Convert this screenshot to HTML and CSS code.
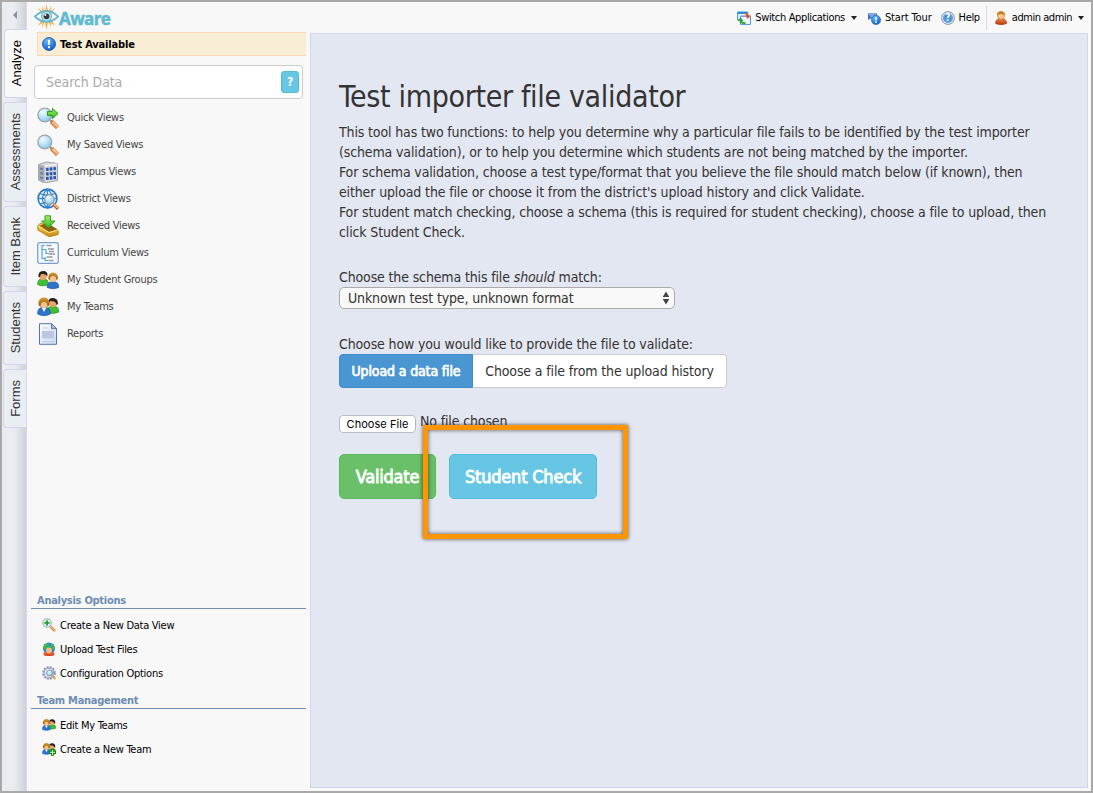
FILE: index.html
```html
<!DOCTYPE html>
<html lang="en">
<head>
<meta charset="utf-8">
<title>Test importer file validator</title>
<link rel="stylesheet" href="styles.css">
</head>
<body>
<svg class="defs" width="0" height="0" aria-hidden="true">
  <defs>
    <radialGradient id="lens" cx=".35" cy=".3" r=".8"><stop offset="0" stop-color="#f2fbff"/><stop offset=".5" stop-color="#b9e2f6"/><stop offset="1" stop-color="#7cbfe6"/></radialGradient>
    <linearGradient id="leaf" x2="0" y2="1"><stop offset="0" stop-color="#a4f06a"/><stop offset="1" stop-color="#2fb41c"/></linearGradient>
    <linearGradient id="gold" x2="0" y2="1"><stop offset="0" stop-color="#ffd75a"/><stop offset="1" stop-color="#c98a10"/></linearGradient>
    <radialGradient id="blue" cx=".4" cy=".25" r=".8"><stop offset="0" stop-color="#6dbcff"/><stop offset="1" stop-color="#0a58c4"/></radialGradient>
    <linearGradient id="hair" x2="0" y2="1"><stop offset="0" stop-color="#d69b34"/><stop offset="1" stop-color="#8f560c"/></linearGradient>
    <linearGradient id="page" x2="1" y2="1"><stop offset="0" stop-color="#ffffff"/><stop offset="1" stop-color="#cdd9f2"/></linearGradient>
    <linearGradient id="rust" x2="0" y2="1"><stop offset="0" stop-color="#f08a4a"/><stop offset="1" stop-color="#b83708"/></linearGradient>
  </defs>
  <symbol id="magnifier" viewBox="0 0 22 22">
    <path d="M13 13l2.500 2.500" stroke="#888" stroke-width="2"/>
    <path d="M14.500 14.500l6 6" stroke="#c4703a" stroke-width="4.400"/>
    <path d="M15 15l5.200 5.200" stroke="#f99a4f" stroke-width="3"/>
    <path d="M16 14.800l4.500 4.500" stroke="#ffe0be" stroke-width="1.200"/>
    <circle cx="7.800" cy="8" r="6.900" fill="url(#lens)" stroke="#a0a6aa" stroke-width="1.400"/>
  </symbol>
  <symbol id="quick" viewBox="0 0 22 22">
    <use href="#magnifier"/>
    <path d="M10.500 4.500h5V1.300l5.500 5.200-5.500 5.200V8.500h-5z" fill="url(#leaf)" stroke="#22961a" stroke-width=".9"/>
  </symbol>
  <symbol id="campus" viewBox="0 0 22 22">
    <path d="M1.500 3.500l8-2.500 11 1.500v17l-13 2.500-6-3z" fill="#d7d9dc" stroke="#8b9096" stroke-width=".8"/>
    <path d="M1.500 3.500l6 1.500v17l-6-3z" fill="#a9adb2"/>
    <path d="M7.500 5l13-2" stroke="#fff"/>
    <path d="M3 7.500l3 .7M3 12l3 .8M3 16.500l3 .8" stroke="#6d80a5" stroke-width="2"/>
    <path d="M9 8.500l10-1M9 13l10-.7M9 17.500l10-1" stroke="#2857b0" stroke-width="3.200" stroke-dasharray="2.700 1"/>
  </symbol>
  <symbol id="district" viewBox="0 0 22 22">
    <circle cx="10.500" cy="10.500" r="9.400" fill="#f5fbff" stroke="#2777c8" stroke-width="1.600"/>
    <path d="M1 10.500h19M2.500 5.500q8 3 16 0M2.500 16q8-3 16 0M10.500 1v19M10.500 1q-10 9.500 0 19M10.500 1q10 9.500 0 19" fill="none" stroke="#3385d2" stroke-width="1.300"/>
    <circle cx="12.500" cy="11.500" r="4.800" fill="url(#lens)" stroke="#8f9ca8" stroke-width="1.200"/>
    <path d="M16.500 16l4.500 5" stroke="#cb5a23" stroke-width="3.200"/><path d="M16.500 15.500l4.200 4.500" stroke="#ffc582" stroke-width="1.400"/>
  </symbol>
  <symbol id="received" viewBox="0 0 22 22">
    <path d="M.8 10.500l3-2.500 17.400 7.500v4l-9 2.300L.8 15z" fill="url(#gold)" stroke="#a8740c" stroke-width=".8"/>
    <path d="M2.500 10.500l8-2.500 10 6.500-8.500 2.500z" fill="#8b610b"/>
    <path d="M1.300 11.500l10.700 6 9-2.500" fill="none" stroke="#ffe990"/>
    <path d="M8 .8h5.500V6H18l-6.500 7L4.500 6H8z" fill="url(#leaf)" stroke="#279b1c" stroke-width=".9"/>
  </symbol>
  <symbol id="curriculum" viewBox="0 0 22 22">
    <rect x=".7" y=".7" width="20.600" height="20.600" rx="2" fill="#f6f9ff" stroke="#7f9fd0" stroke-width="1.300"/>
    <path d="M5 3v13.500h3M5 3.500h3M5 7.500h4M9 7.500v4h3M8 15v3.500h3" fill="none" stroke="#4ba7dd" stroke-width="1.200"/>
    <path d="M9.500 3.500h5M11 7h6M12 9.500h5M12 12h6M9.500 15h6M11.500 18.500h5" stroke="#999ca1" stroke-width="1.400"/>
  </symbol>
  <symbol id="groups" viewBox="0 0 22 22">
    <path d="M.5 15.500q0-6 5.500-6t5.500 6q-5.500 3-11 0z" fill="#43bd35" stroke="#258f20" stroke-width=".6"/>
    <circle cx="6" cy="7" r="3.900" fill="#e9a56a"/><path d="M1.500 8Q1 2 6 2t4.500 5Q8 4.500 4 5L3 8z" fill="#24201c"/>
    <path d="M10 18.500q0-6 6-6t6 6q-6 2.500-12 0z" fill="#2f73cf" stroke="#1c52a6" stroke-width=".6"/>
    <circle cx="16" cy="9" r="4" fill="#f5c28e"/><path d="M11.300 10Q11 3.500 16 3.500t5 6.500l-1.500 1q0-4-3.500-4t-3 4z" fill="url(#hair)"/>
  </symbol>
  <symbol id="teams" viewBox="0 0 22 22">
    <path d="M10 16q0-6 6-6t6 6q-6 3-12 0z" fill="#43bd35" stroke="#258f20" stroke-width=".6"/>
    <circle cx="16" cy="7" r="4" fill="#e9a56a"/><path d="M11.300 7Q11 2 16 2t5 6l-1.500 1q0-4-6-4z" fill="#24201c"/>
    <path d="M.5 18q0-7 6.500-7t6.500 7q-6.500 3.500-13 0z" fill="#2f73cf" stroke="#1c52a6" stroke-width=".6"/>
    <path d="M5 12l2 4 2-4z" fill="#fff"/>
    <circle cx="7" cy="7.500" r="4.700" fill="#f5c28e"/><path d="M1.500 9Q1 1.500 7 1.500T12.500 9L10.500 11q0-5-3.500-5t-3.500 5z" fill="url(#hair)"/>
  </symbol>
  <symbol id="report" viewBox="0 0 22 22">
    <path d="M2.500.7h12l5 5v15.600h-17z" fill="url(#page)" stroke="#5876ad" stroke-width="1"/>
    <path d="M14.500.7v5h5z" fill="#a9c0e8" stroke="#5876ad"/>
    <path d="M5.500 5h6M5.500 18.500h11" stroke="#c2c9dc"/><path d="M5 8h12v7.500H5z" fill="#bdc6df"/>
  </symbol>
  <symbol id="add-view" viewBox="0 0 14 14">
    <path d="M8.500 8.500l4.500 4.500" stroke="#d08c48" stroke-width="2.600"/><path d="M9 8.500l4 4" stroke="#ffd8a0"/>
    <circle cx="5" cy="5" r="4.300" fill="#ddf3fa" stroke="#9aabb4"/>
    <path d="M5 2.200v5.600M2.200 5h5.600" stroke="#20a020" stroke-width="1.700"/>
  </symbol>
  <symbol id="upload" viewBox="0 0 14 14">
    <circle cx="7" cy="6.500" r="6" fill="#318bd2"/><path d="M4 1.500q4 .5 3 4l-5 2Q0 3 4 1.500zM9 1q4 2 4 6l-4 0z" fill="#43b64b"/>
    <path d="M1.500 12.500V11L4 9.500q0-3 3-3t3 3l2.500 1.500v1.500q-5.500 3-11 0z" fill="#e66338"/><circle cx="7" cy="8.300" r="2.900" fill="#f5bd89"/>
    <path d="M2 12.500q5 1.600 10 0" stroke="#d84a22" stroke-width="1.500" fill="none"/>
  </symbol>
  <symbol id="config" viewBox="0 0 14 14">
    <circle cx="7" cy="7" r="5.900" fill="none" stroke="#8e94b8" stroke-width="1.800" stroke-dasharray="2 1.090"/>
    <circle cx="7" cy="7" r="4.800" fill="#f5f6fc" stroke="#9298bb" stroke-width="1"/>
    <circle cx="7.500" cy="7" r="3" fill="url(#lens)" stroke="#7896b8"/><path d="M9.800 9.500l3.500 3.500" stroke="#e79a62" stroke-width="2.200"/>
  </symbol>
  <symbol id="add-team" viewBox="0 0 14 14">
    <use href="#teams" width="14" height="14"/><path d="M10.500 6.800v7M7 10.300h7" stroke="#087d12" stroke-width="3.200"/><path d="M10.500 7.700v5.200M7.900 10.300h5.200" stroke="#b6f497" stroke-width="1.200"/>
  </symbol>
  <symbol id="switch" viewBox="0 0 14 14">
    <path d="M.7 1h10v8H.7z" fill="#eef7ff" stroke="#2b8bdd"/><path d="M.7 2h10" stroke="#2b8bdd" stroke-width="2"/>
    <path d="M3.500 5h10v8.400h-10z" fill="#f4faff" stroke="#4796e0"/><path d="M3.500 5.500h10" stroke="#6badf0"/>
    <path d="M7 2q4-1 4.500 2.500H13.500L10.800 8 8 4.500H9.500Q9 3 7 2z" fill="#ee5023"/>
    <path d="M8.500 13q-6 .5-6-3H.5L3.500 6.500l3.200 3.500H5q.3 1.500 3.500 1z" fill="#2da534"/>
  </symbol>
  <symbol id="tour" viewBox="0 0 14 14">
    <path d="M1 2.500h9v5H3.500L1 9z" fill="#3e6fc2"/><path d="M1 2.500h9L4.500 7z" fill="#7ea5e2"/>
    <circle cx="9" cy="9" r="4.700" fill="url(#blue)" stroke="#1c63c2" stroke-width=".5"/><path d="M9 6v3.500M9 10.500V12" stroke="#fff" stroke-width="1.500"/>
  </symbol>
  <symbol id="user" viewBox="0 0 14 14">
    <path d="M1.500 12.500Q1.500 7.500 7 7.500t5.700 5Q7 15 1.500 12.500z" fill="url(#rust)" stroke="#b23b0c" stroke-width=".6"/>
    <circle cx="7" cy="4.500" r="3.700" fill="#f7c590" stroke="#c8812f" stroke-width=".6"/><path d="M3 4.500Q3 .2 7 .2t4 4.600Q9 2.500 6 3z" fill="#c87d19"/>
  </symbol>
</svg>

<div class="app">
  <nav class="tabs">
    <div class="collapse"><i></i></div>
    <a class="tab tab-analyze active"><span>Analyze</span></a>
    <a class="tab tab-assessments"><span>Assessments</span></a>
    <a class="tab tab-bank"><span>Item Bank</span></a>
    <a class="tab tab-students"><span>Students</span></a>
    <a class="tab tab-forms"><span>Forms</span></a>
  </nav>

  <aside class="sidebar">
    <div class="brand">
      <svg width="25" height="26" viewBox="0 0 25 26">
        <path d="M12.500 0l1.500 7h-3zM12.500 26l1.500-7h-3zM4 4l5.500 4-2 2zM21 4l-5.500 4 2 2zM4 22l5.500-4-2-2zM21 22l-5.500-4 2-2zM8 1.500l2.500 6-2 .5zM17 1.500l-2.500 6 2 .5zM8 24l2.500-6-2-.5zM17 24l-2.500-6 2-.5z" fill="#f4b350"/>
        <path d="M.8 12.500Q12.500 1.500 24.200 12.500 12.500 23 .8 12.500z" fill="#fff" stroke="#62b5cb" stroke-width="1.700"/>
        <circle cx="12.500" cy="12.300" r="5" fill="#c4e1e8" stroke="#70b7c9" stroke-width="1.200"/><circle cx="12.500" cy="12.300" r="2.900" fill="#333a3e"/><circle cx="11.300" cy="11" r="1" fill="#fff"/>
      </svg>
      <span>Aware</span>
    </div>
    <div class="notice">
      <svg width="14" height="14" viewBox="0 0 14 14"><circle cx="7" cy="7" r="6.500" fill="url(#blue)" stroke="#1252a4" stroke-width=".8"/><path d="M7 2.800v5M7 9.200v2" stroke="#fff" stroke-width="2"/></svg>
      <span>Test Available</span>
    </div>
    <div class="search"><span>Search Data</span><b>?</b></div>
    <ul class="views">
      <li><svg><use href="#quick"/></svg><span>Quick Views</span></li>
      <li><svg><use href="#magnifier"/></svg><span>My Saved Views</span></li>
      <li><svg><use href="#campus"/></svg><span>Campus Views</span></li>
      <li><svg><use href="#district"/></svg><span>District Views</span></li>
      <li><svg><use href="#received"/></svg><span>Received Views</span></li>
      <li><svg><use href="#curriculum"/></svg><span>Curriculum Views</span></li>
      <li><svg><use href="#groups"/></svg><span>My Student Groups</span></li>
      <li><svg><use href="#teams"/></svg><span>My Teams</span></li>
      <li><svg><use href="#report"/></svg><span>Reports</span></li>
    </ul>
    <section class="options">
      <h2>Analysis Options</h2>
      <ul>
        <li><svg><use href="#add-view"/></svg><span>Create a New Data View</span></li>
        <li><svg><use href="#upload"/></svg><span>Upload Test Files</span></li>
        <li><svg><use href="#config"/></svg><span>Configuration Options</span></li>
      </ul>
      <h2>Team Management</h2>
      <ul>
        <li><svg><use href="#teams"/></svg><span>Edit My Teams</span></li>
        <li><svg><use href="#add-team"/></svg><span>Create a New Team</span></li>
      </ul>
    </section>
  </aside>

  <div class="workspace">
    <header class="topbar">
      <a class="item switch"><svg><use href="#switch"/></svg><span>Switch Applications</span><i class="caret"></i></a>
      <a class="item tour"><svg><use href="#tour"/></svg><span>Start Tour</span></a>
      <a class="item help"><b>?</b><span>Help</span></a>
      <a class="item user"><svg><use href="#user"/></svg><span>admin admin</span><i class="caret"></i></a>
    </header>
    <main class="content">
      <h1>Test importer file validator</h1>
      <p class="intro">This tool has two functions: to help you determine why a particular file fails to be identified by the test importer<br>
      (schema validation), or to help you determine which students are not being matched by the importer.<br>
      For schema validation, choose a test type/format that you believe the file should match below (if known), then<br>
      either upload the file or choose it from the district's upload history and click Validate.<br>
      For student match checking, choose a schema (this is required for student checking), choose a file to upload, then<br>
      click Student Check.</p>
      <div class="label">Choose the schema this file <em>should</em> match:</div>
      <div class="select"><span>Unknown test type, unknown format</span><svg width="8" height="14" viewBox="0 0 8 14"><path d="M4 .5L7.300 6H.7zM4 13.500L7.300 8H.7z" fill="#444"/></svg></div>
      <div class="label second">Choose how you would like to provide the file to validate:</div>
      <div class="segmented"><button class="primary">Upload a data file</button><button>Choose a file from the upload history</button></div>
      <div class="file"><button>Choose File</button><span>No file chosen</span></div>
      <div class="actions">
        <button class="validate">Validate</button>
        <div class="spot"><button class="check">Student Check</button><div class="highlight"></div></div>
      </div>
    </main>
  </div>
</div>
</body>
</html>
```
FILE: styles.css
```css
* { box-sizing: border-box; }
body { margin: 0; font-family: "DejaVu Sans Condensed", "DejaVu Sans", sans-serif; font-stretch: condensed; color: #333; }
ul { list-style: none; margin: 0; padding: 0; }
button { font-family: inherit; font-stretch: inherit; letter-spacing: inherit; margin: 0; padding: 0; }
span, button, h1, .label, .intro { white-space: nowrap; }
.defs { position: absolute; }

.app { display: flex; width: 1093px; height: 793px; border: 2px solid #a9a9a9; background: #f8f8f8; overflow: hidden; }

/* Vertical section tabs */
.tabs { width: 25px; flex: none; display: flex; flex-direction: column; align-items: flex-end; background: linear-gradient(90deg, #e9edf2 50%, #cfd3d8); border-right: 1px solid #d6d6ec; }
.collapse { width: 24px; height: 27px; padding: 9px 0 0 11px; flex: none; }
.collapse i { display: block; width: 4px; height: 8px; border: 4px solid transparent; border-left: 0; border-right-color: #8b8ea0; }
.tab { display: flex; align-items: center; justify-content: center; width: 23px; flex: none; margin-bottom: 4px; padding-left: 2px; border: 1px solid #d2d4ea; border-right: 0; border-radius: 4px 0 0 4px; background: #e9eef3; font: 13px "Liberation Sans", Arial, sans-serif; color: #333; }
.tab span { writing-mode: vertical-rl; transform: rotate(180deg); line-height: 16px; }
.tab-analyze { height: 69px; }
.tab.active { margin-right: -1px; background: #f8f8f8; color: #000; }
.tab-assessments { height: 100px; }
.tab-bank { height: 81px; }
.tab-students { height: 74px; }
.tab-forms { height: 59px; }

/* Sidebar */
.sidebar { width: 283px; flex: none; display: flex; flex-direction: column; padding: 2px 4px 0 4px; letter-spacing: -.27px; }
.brand { display: flex; height: 28px; padding-left: 3px; }
.brand svg { flex: none; }
.brand span { font: bold 17px/29px "Open Sans", sans-serif; letter-spacing: -.6px; color: #62b9d2; -webkit-text-stroke: .5px #62b9d2; }
.notice { display: flex; align-items: center; gap: 4px; height: 24px; margin-left: 6px; padding-left: 4px; border: 1px solid #f8d8b4; border-right: 0; background: #f9edd5; font-size: 11px; font-weight: bold; letter-spacing: -.17px; color: #000; }
.search { display: flex; align-items: center; justify-content: space-between; height: 34px; width: 269px; margin: 9px 0 0 3px; padding: 0 3px 0 11px; border: 1px solid #ccc; border-radius: 4px; background: #fff; font-size: 14px; letter-spacing: -.1px; color: #aaa; }
.search b { width: 18px; height: 22px; border: 1px solid #4fbcdb; border-radius: 3px; background: #66c6e3; color: #fff; font-size: 12px; line-height: 20px; text-align: center; }
.views { padding: 8px 0 0 6px; }
.views li { display: flex; height: 27px; gap: 8px; font-size: 11px; line-height: 22px; color: #444; }
.views svg { width: 22px; height: 22px; }
.options { margin-top: auto; padding-bottom: 30px; }
.options h2 { margin: 0; height: 18px; padding-left: 6px; border-bottom: 1px solid #6d8db2; font-size: 11px; line-height: 20px; color: #6d8db2; }
.options ul { padding: 4px 0 0 11px; }
.options ul + h2 { margin-top: 6px; }
.options li { display: flex; align-items: center; gap: 4px; height: 24px; font-size: 11px; color: #000; }
.options li svg { width: 14px; height: 14px; }

/* Header and content */
.workspace { flex: 1; display: flex; flex-direction: column; }
.topbar { display: flex; height: 31px; flex: none; justify-content: flex-end; align-items: center; padding-right: 7px; font-size: 11px; letter-spacing: -.35px; color: #000; }
.item { display: flex; align-items: center; gap: 4px; height: 24px; }
.item svg { width: 14px; height: 14px; }
.item .caret { border: 3px solid transparent; border-top: 4px solid #222; border-bottom: 0; margin-left: 2px; }
.tour { margin-left: 10px; letter-spacing: -.12px; }
.help { margin-left: 9px; padding-right: 6px; border-right: 1px solid #d2d5ea; }
.user { margin-left: 7px; letter-spacing: -.45px; }
.help b { width: 14px; height: 14px; border: 1px solid #9aa4b0; border-radius: 50%; background: radial-gradient(#3478c8, #8dc4f0); box-shadow: inset 0 0 0 1px #dce8f4; color: #fff; font-size: 10px; line-height: 12px; text-align: center; }
.content { width: 778px; height: 755px; margin: 0; padding: 42px 0 0 28px; border: 1px solid #d2d5ec; background: #e3e7f1; font-size: 14px; line-height: 20px; letter-spacing: -.137px; }
h1 { margin: 0; height: 46px; font-size: 30px; line-height: 41px; font-weight: normal; letter-spacing: -.33px; }
.intro { margin: 0 0 25px; }
.label { height: 20px; }
.second { margin-top: 25px; }
.select { display: flex; align-items: center; justify-content: space-between; width: 336px; height: 22px; padding: 0 4px 0 8px; border: 1px solid #aaa; border-radius: 5px; background: #f9f9f9; }
.segmented { display: flex; height: 34px; }
.segmented button { width: 254px; border: 1px solid #ccc; border-left: 0; border-radius: 0 4px 4px 0; background: #fff; font-size: 14px; color: #333; }
.segmented .primary { width: 134px; border: 1px solid #3f8ccb; border-radius: 4px 0 0 4px; background: #4a96d2; color: #fff; -webkit-text-stroke: .7px #fff; }
.file { display: flex; gap: 4px; margin-top: 23px; height: 43px; }
.file button { width: 77px; height: 18px; margin-top: 4px; border: 1px solid #b9b9c2; border-radius: 4px; background: #fff; font-family: Inter, sans-serif; font-size: 11px; letter-spacing: .05px; color: #000; }
.actions { display: flex; gap: 13px; }
.actions button { height: 45px; border: 1px solid #5ab85a; border-radius: 5px; background: #69c069; color: #fff; font-size: 18px; letter-spacing: -.2px; -webkit-text-stroke: .8px #fff; }
.actions .validate { width: 97px; }
.actions .check { width: 148px; border-color: #50bddd; background: #66c6e3; }
.spot { position: relative; }
.highlight { position: absolute; left: -26px; top: -29px; width: 205px; height: 114px; border: 5px solid #ff9500; box-shadow: 0 0 4px rgba(0,0,0,.65), inset 0 0 4px rgba(0,0,0,.65); }
```
